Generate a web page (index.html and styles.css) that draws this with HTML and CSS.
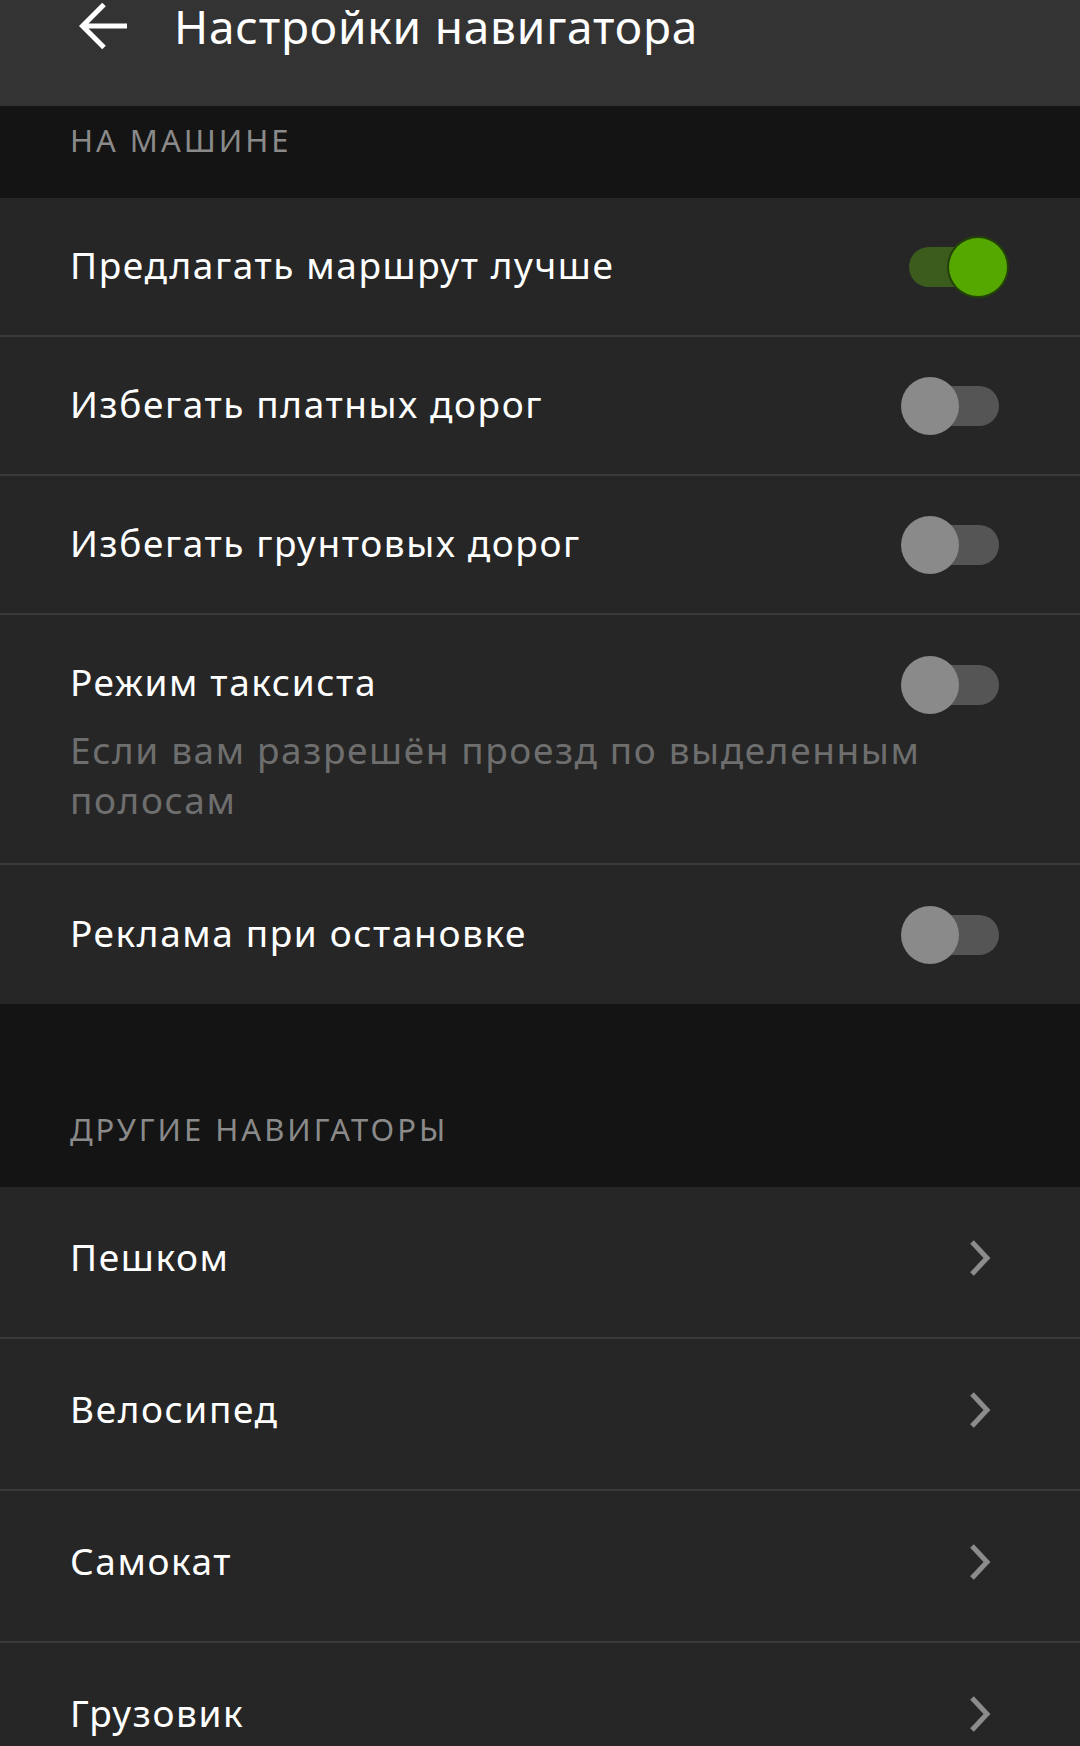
FILE: index.html
```html
<!DOCTYPE html>
<html lang="ru">
<head>
  <meta charset="UTF-8">
  <meta name="viewport" content="width=device-width, initial-scale=1.0">
  <title>Настройки навигатора</title>
  <link rel="stylesheet" href="styles.css">
</head>
<body>
  <div class="header">
    <svg class="back" width="50" height="48" viewBox="0 0 50 48">
      <path d="M48 23 H4 M25 1.5 L3.5 23 L25 44.5" fill="none" stroke="#fff" stroke-width="5"/>
    </svg>
    <h1 class="title">Настройки навигатора</h1>
  </div>

  <div class="section-label">НА МАШИНЕ</div>

  <div class="row">
    <span class="row-text">Предлагать маршрут лучше</span>
    <div class="toggle on"><div class="knob"></div></div>
  </div>
  <div class="row">
    <span class="row-text">Избегать платных дорог</span>
    <div class="toggle"><div class="knob"></div></div>
  </div>
  <div class="row">
    <span class="row-text">Избегать грунтовых дорог</span>
    <div class="toggle"><div class="knob"></div></div>
  </div>
  <div class="row tall">
    <div class="row-line">
      <span class="row-text">Режим таксиста</span>
      <div class="toggle"><div class="knob"></div></div>
    </div>
    <p class="row-hint">Если вам разрешён проезд по выделенным полосам</p>
  </div>
  <div class="row last">
    <span class="row-text">Реклама при остановке</span>
    <div class="toggle"><div class="knob"></div></div>
  </div>

  <div class="spacer"></div>
  <div class="section-label">ДРУГИЕ НАВИГАТОРЫ</div>

  <div class="row nav">
    <span class="row-text">Пешком</span>
    <svg class="chevron" width="22" height="36" viewBox="0 0 22 36"><path d="M3 2 L18 18 L3 34" fill="none" stroke="#8c8c8c" stroke-width="5"/></svg>
  </div>
  <div class="row nav">
    <span class="row-text">Велосипед</span>
    <svg class="chevron" width="22" height="36" viewBox="0 0 22 36"><path d="M3 2 L18 18 L3 34" fill="none" stroke="#8c8c8c" stroke-width="5"/></svg>
  </div>
  <div class="row nav">
    <span class="row-text">Самокат</span>
    <svg class="chevron" width="22" height="36" viewBox="0 0 22 36"><path d="M3 2 L18 18 L3 34" fill="none" stroke="#8c8c8c" stroke-width="5"/></svg>
  </div>
  <div class="row nav">
    <span class="row-text">Грузовик</span>
    <svg class="chevron" width="22" height="36" viewBox="0 0 22 36"><path d="M3 2 L18 18 L3 34" fill="none" stroke="#8c8c8c" stroke-width="5"/></svg>
  </div>
</body>
</html>
```

FILE: styles.css
```css
body {
  margin: 0;
  padding: 0;
  background-color: #262626;
  font-family: "Noto Sans", "Open Sans", sans-serif;
  color: #fff;
}

.header {
  height: 106px;
  background-color: #333333;
  display: flex;
  align-items: flex-start;
  box-sizing: border-box;
  padding-left: 79px;
}

.back {
  margin-top: 3px;
}

.title {
  margin: 0 0 0 45px;
  font-size: 46px;
  font-weight: normal;
  line-height: 52px;
  letter-spacing: 0.8px;
  color: #fff;
}

.section-label {
  height: 92px;
  box-sizing: border-box;
  background-color: #141414;
  padding: 0 0 42px 70px;
  display: flex;
  align-items: flex-end;
  font-size: 31px;
  font-weight: normal;
  letter-spacing: 3px;
  color: #8a8a8a;
  line-height: 32px;
}

.spacer {
  height: 91px;
  background-color: #141414;
}

.row {
  height: 139px;
  box-sizing: border-box;
  display: flex;
  align-items: center;
  justify-content: space-between;
  padding: 0 81px 0 70px;
  border-bottom: 2px solid #3a3a3a;
}

.row > .row-text {
  margin-bottom: 4px;
}

.row.last {
  border-bottom: none;
  height: 139px;
}

.row.tall {
  height: 250px;
  display: block;
  padding-top: 42px;
}

.row-line {
  display: flex;
  align-items: center;
  justify-content: space-between;
  height: 50px;
}

.row-line .toggle {
  margin-top: 6px;
}

.row-text {
  font-size: 37px;
  line-height: 50px;
  letter-spacing: 1.6px;
  color: #fff;
}

.row-hint {
  margin: 18px 0 0 0;
  font-size: 37px;
  line-height: 50px;
  letter-spacing: 1.6px;
  color: #6e6e6e;
  width: 900px;
}

.row.nav {
  height: 152px;
  padding-right: 89px;
  padding-bottom: 8px;
}

.row.nav > .row-text {
  margin-bottom: 2px;
}

.toggle {
  position: relative;
  width: 90px;
  height: 40px;
  border-radius: 20px;
  background-color: #555555;
}

.toggle .knob {
  position: absolute;
  top: -9px;
  left: -8px;
  width: 58px;
  height: 58px;
  border-radius: 50%;
  background-color: #8a8a8a;
}

.toggle.on {
  background-color: #3c5c1e;
}

.toggle.on .knob {
  left: auto;
  right: -8px;
  background-color: #55a800;
  box-shadow: 0 0 0 2px #234208;
}
```
